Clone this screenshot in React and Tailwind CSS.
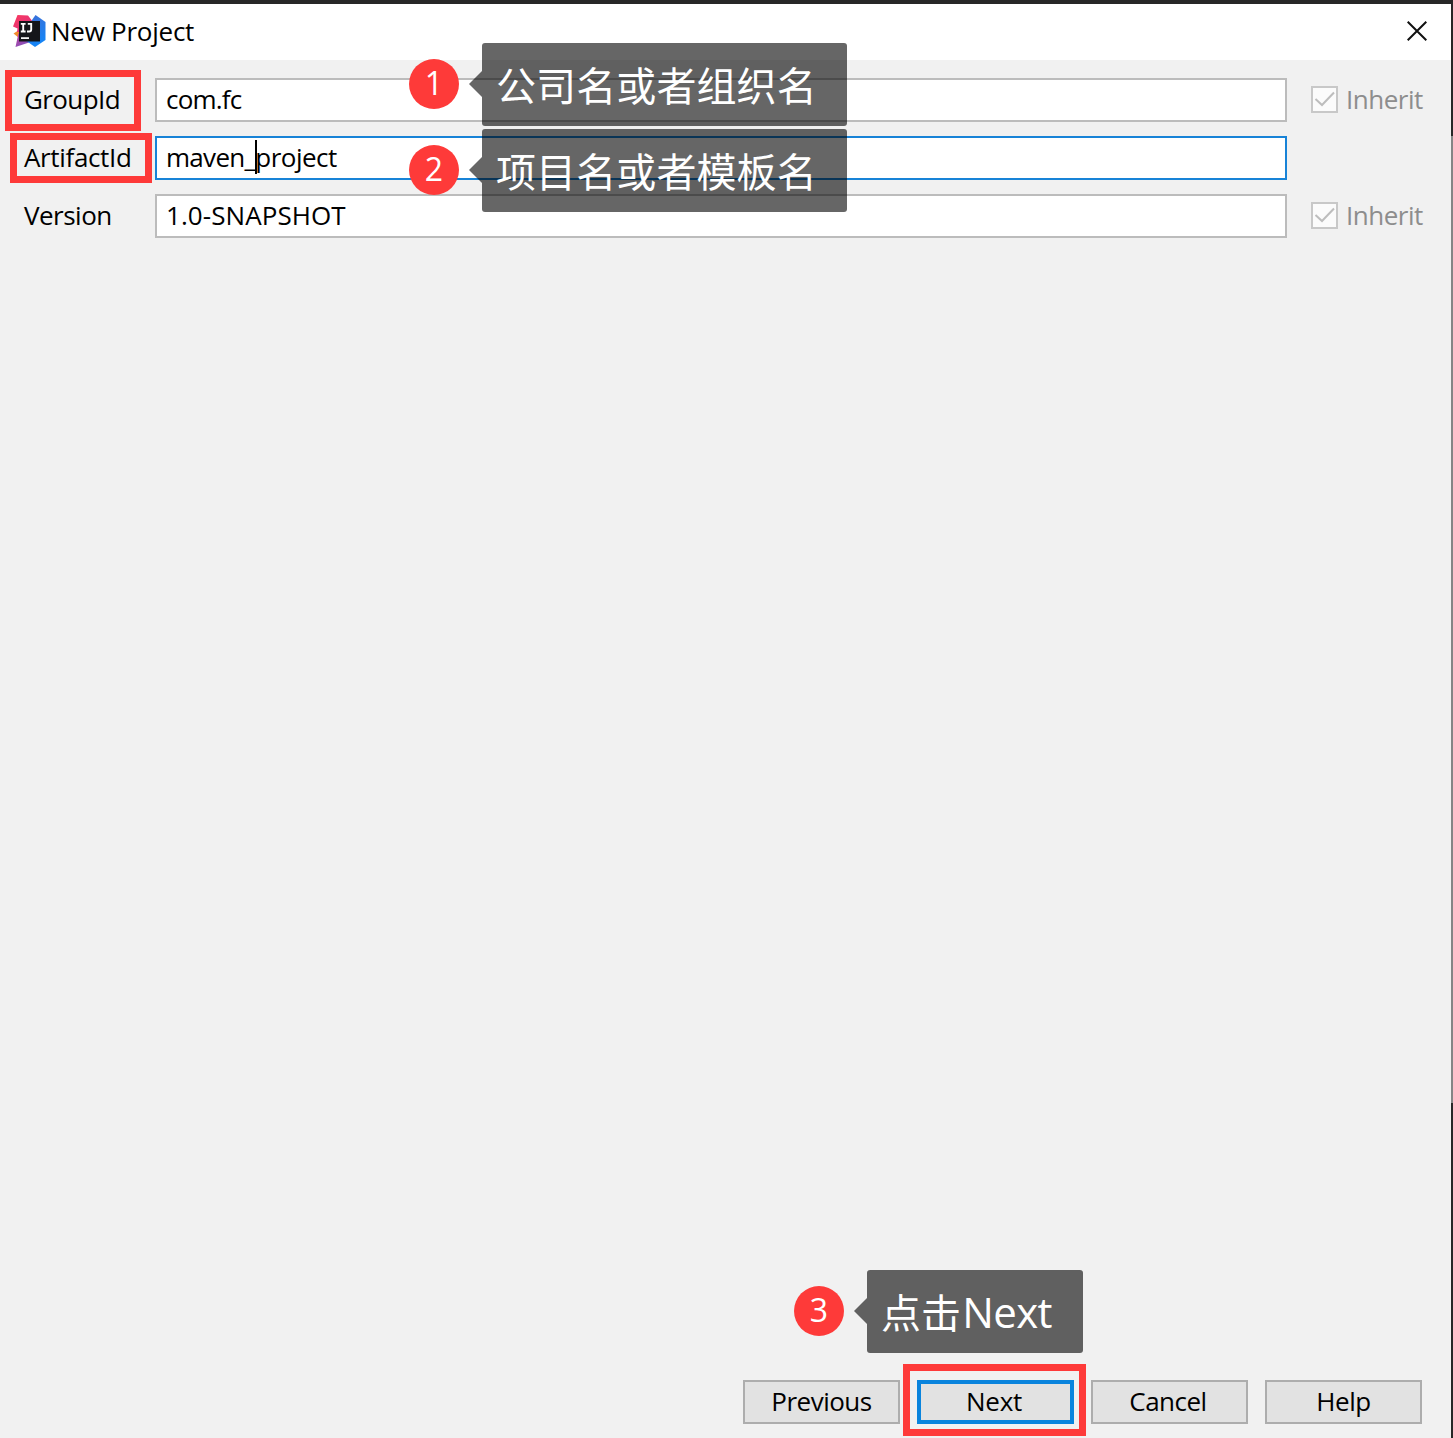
import React from "react";

function IdeaLogo() {
  return (
    <svg className="block h-[34px] w-[34px]" viewBox="0 0 34 34" aria-hidden="true">
      <defs>
        <linearGradient id="pink" x1="0" y1="0" x2="1" y2="1">
          <stop offset="0" stopColor="#fb3b5c" />
          <stop offset="1" stopColor="#d92d87" />
        </linearGradient>
        <linearGradient id="blue" x1="0" y1="0" x2="0.3" y2="1">
          <stop offset="0" stopColor="#3f6fd6" />
          <stop offset="1" stopColor="#1584f5" />
        </linearGradient>
        <linearGradient id="purple" x1="0" y1="0" x2="1" y2="1">
          <stop offset="0" stopColor="#c0409a" />
          <stop offset="1" stopColor="#6f57c8" />
        </linearGradient>
      </defs>
      <path d="M7 16 L1.500 19.500 L7 24 Z" fill="#f28b2c" />
      <path d="M5.500 1 L16 1.500 L21 8 L19 18 L5 18 L5.500 14.500 L1 12.500 Z" fill="url(#pink)" />
      <path d="M6.500 19 L14 26 L20 27.500 L3.500 33 Z" fill="url(#purple)" />
      <path d="M20 6 L23.500 1 L33.500 8 L33.500 26 L23 33 L13 26 Z" fill="url(#blue)" />
      <path d="M7 7 H28 V27.500 H7 Z" fill="#15161a" />
      <path d="M8.800 9.900 H13.600 M11.200 9.900 V17.500 M8.800 17.500 H13.600 M15.800 9.900 H19.200 V15.500 Q19.200 17.500 17.200 17.500 H15" fill="none" stroke="#fff" strokeWidth="1.900" />
      <path d="M9 24.100 H17" stroke="#fff" strokeWidth="1.700" />
    </svg>
  );
}

function Inherit() {
  return (
    <label className="ml-6 flex items-center pb-0.5 text-[#8d8d8d]">
      <span className="mr-2 flex h-[27px] w-[27px] items-center justify-center border-2 border-[#c8c8c8] bg-[#fbfbfb]">
        <svg className="h-[23px] w-[23px] shrink-0" viewBox="0 0 23 23" fill="none" stroke="#bdbdbd" strokeWidth="2">
          <path d="M2.500 11 L9 17 L21 4.500" />
        </svg>
      </span>
      <span className="pb-px tracking-[-0.500px]">Inherit</span>
    </label>
  );
}

function Marker({ className }) {
  return <span className={`pointer-events-none absolute border-[7px] border-[#fe3a39] ${className}`} />;
}

function Callout({ number, className, children }) {
  return (
    <div className={`pointer-events-none absolute flex h-[83px] text-white ${className}`}>
      <span className="mt-4 flex h-[50px] w-[50px] items-center justify-center rounded-full bg-[#fe3a39] pb-[3px] text-[32px] leading-none">
        {number}
      </span>
      <svg className="ml-[10px] mt-7 h-[26px] w-[13px]" viewBox="0 0 13 26">
        <path d="M13 0 L0 13 L13 26 Z" fill="#000" fillOpacity="0.600" />
      </svg>
      <div className="flex flex-1 items-center rounded-[3px] bg-black/60 pt-[3px] pl-[14px] text-[40px] leading-none tracking-[0.100px] whitespace-nowrap">
        {children}
      </div>
    </div>
  );
}

function Field({ label, labelClass, children, focused, inherit }) {
  return (
    <div className="flex h-11 items-center">
      <span className={`w-[155px] pb-[3px] pl-6 ${labelClass}`}>{label}</span>
      <div className={`flex h-11 w-[1132px] items-center border-2 bg-white pb-[3px] pl-[9px] ${focused ? "border-[#1883d7]" : "border-[#bcbcbc]"}`}>
        {children}
      </div>
      {inherit && <Inherit />}
    </div>
  );
}

const buttonClass = "flex h-11 w-[157px] items-center justify-center bg-[#e2e2e2] pb-[3px]";

export default function App() {
  return (
    <div className="relative flex h-[1438px] w-[1453px] flex-col overflow-hidden bg-[#f1f1f1] font-['Open_Sans','Noto_Sans_CJK_SC',sans-serif] text-[26px] leading-[36px] text-black">
      <div className="h-1 shrink-0 bg-[#272727]" />
      <div className="flex min-h-0 flex-1">
        <div className="flex w-[1451px] flex-col">
          <header className="flex h-14 items-center bg-white pb-0.5 pl-3">
            <IdeaLogo />
            <h1 className="ml-[5px] pb-px tracking-[-0.250px]">New Project</h1>
            <svg className="mr-6 ml-auto h-5 w-5" viewBox="0 0 20 20" fill="none" stroke="#111" strokeWidth="2">
              <path d="M0.700 0.700 L19.300 19.300 M19.300 0.700 L0.700 19.300" />
            </svg>
          </header>
          <main className="flex flex-1 flex-col gap-[14px] pt-[18px]">
            <Field label="GroupId" labelClass="tracking-[-0.600px]" inherit>
              <span className="tracking-[-0.800px]">com.fc</span>
            </Field>
            <Field label="ArtifactId" labelClass="tracking-[-0.350px]" focused>
              <span className="tracking-[-0.700px]">maven_</span>
              <span className="-mr-0.5 h-[34px] w-0.5 bg-black" />
              <span className="tracking-[-0.500px]">project</span>
            </Field>
            <Field label="Version" labelClass="tracking-[-0.500px]" inherit>
              <span className="tracking-[0.080px]">1.0-SNAPSHOT</span>
            </Field>
          </main>
          <footer className="flex justify-end gap-[17px] pr-[29px] pb-[14px]">
            <button className={`${buttonClass} border-2 border-[#adadad] tracking-[-0.500px]`}>Previous</button>
            <button className={`${buttonClass} border-4 border-[#0a84dd] pr-[3px] tracking-[-0.300px]`}>Next</button>
            <button className={`${buttonClass} border-2 border-[#adadad] pr-[3px] tracking-[-0.500px]`}>Cancel</button>
            <button className={`${buttonClass} border-2 border-[#adadad] tracking-[-0.400px]`}>Help</button>
          </footer>
        </div>
        <div className="flex w-0.5 flex-col">
          <div className="h-[132px] bg-[#272727]" />
          <div className="flex-1 bg-[#858585]" />
          <div className="h-[335px] bg-[#272727]" />
        </div>
      </div>

      <Marker className="top-[70px] left-[5px] h-[61px] w-[136px]" />
      <Marker className="top-[133px] left-[10px] h-[50px] w-[142px]" />
      <Marker className="top-[1364px] left-[903px] h-[72px] w-[183px]" />

      <Callout number="1" className="top-[43px] left-[409px] w-[438px]">公司名或者组织名</Callout>
      <Callout number="2" className="top-[129px] left-[409px] w-[438px]">项目名或者模板名</Callout>
      <Callout number="3" className="top-[1270px] left-[794px] w-[289px]">
        点击<span className="pb-[3px] pl-px text-[42px] tracking-[-0.600px]">Next</span>
      </Callout>
    </div>
  );
}
